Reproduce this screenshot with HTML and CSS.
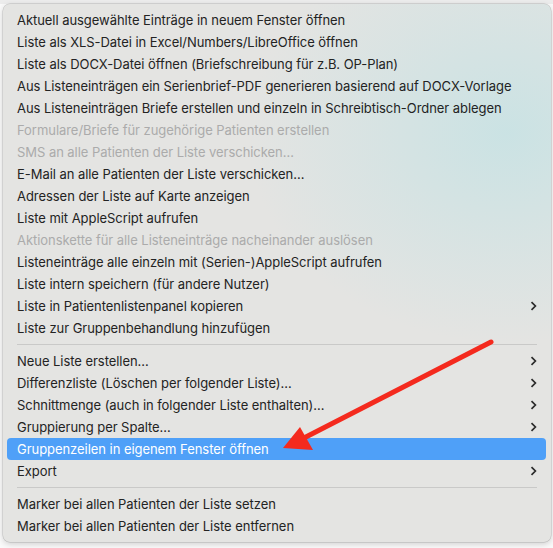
FILE: index.html
```html
<!DOCTYPE html>
<html lang="de">

<head>
  <meta charset="UTF-8" />
  <title>Listen-Kontextmenü</title>
  <link rel="stylesheet" href="styles.css">
</head>

<body>
  <div class="backdrop">
    <div class="menu">
      <div class="item">Aktuell ausgewählte Einträge in neuem Fenster öffnen</div>
      <div class="item">Liste als XLS-Datei in Excel/Numbers/LibreOffice öffnen</div>
      <div class="item">Liste als DOCX-Datei öffnen (Briefschreibung für z.B. OP-Plan)</div>
      <div class="item">Aus Listeneinträgen ein Serienbrief-PDF generieren basierend auf DOCX-Vorlage</div>
      <div class="item">Aus Listeneinträgen Briefe erstellen und einzeln in Schreibtisch-Ordner ablegen</div>
      <div class="item disabled">Formulare/Briefe für zugehörige Patienten erstellen</div>
      <div class="item disabled">SMS an alle Patienten der Liste verschicken…</div>
      <div class="item">E-Mail an alle Patienten der Liste verschicken…</div>
      <div class="item">Adressen der Liste auf Karte anzeigen</div>
      <div class="item">Liste mit AppleScript aufrufen</div>
      <div class="item disabled">Aktionskette für alle Listeneinträge nacheinander auslösen</div>
      <div class="item">Listeneinträge alle einzeln mit (Serien-)AppleScript aufrufen</div>
      <div class="item">Liste intern speichern (für andere Nutzer)</div>
      <div class="item">Liste in Patientenlistenpanel kopieren
        <svg class="chevron" viewBox="0 0 7 10"><path d="M1.5 1.2 L5.4 5 L1.5 8.8" /></svg>
      </div>
      <div class="item">Liste zur Gruppenbehandlung hinzufügen</div>
      <div class="separator"></div>
      <div class="item">Neue Liste erstellen…
        <svg class="chevron" viewBox="0 0 7 10"><path d="M1.5 1.2 L5.4 5 L1.5 8.8" /></svg>
      </div>
      <div class="item">Differenzliste (Löschen per folgender Liste)…
        <svg class="chevron" viewBox="0 0 7 10"><path d="M1.5 1.2 L5.4 5 L1.5 8.8" /></svg>
      </div>
      <div class="item">Schnittmenge (auch in folgender Liste enthalten)…
        <svg class="chevron" viewBox="0 0 7 10"><path d="M1.5 1.2 L5.4 5 L1.5 8.8" /></svg>
      </div>
      <div class="item">Gruppierung per Spalte…
        <svg class="chevron" viewBox="0 0 7 10"><path d="M1.5 1.2 L5.4 5 L1.5 8.8" /></svg>
      </div>
      <div class="item selected">Gruppenzeilen in eigenem Fenster öffnen</div>
      <div class="item">Export
        <svg class="chevron" viewBox="0 0 7 10"><path d="M1.5 1.2 L5.4 5 L1.5 8.8" /></svg>
      </div>
      <div class="separator"></div>
      <div class="item">Marker bei allen Patienten der Liste setzen</div>
      <div class="item">Marker bei allen Patienten der Liste entfernen</div>
    </div>

    <!-- annotation arrow drawn over the menu -->
    <svg class="arrow" viewBox="0 0 553 548">
      <line x1="491" y1="342" x2="300" y2="440" />
      <polygon points="283,448 300,427 313,450" />
    </svg>
  </div>
</body>

</html>
```

FILE: styles.css
```css
/* General */
body {
  margin: 0;
  background: #f3f3f3;
  font-family: 'Inter', 'Liberation Sans', sans-serif;
}

.backdrop {
  position: relative;
  width: 553px;
  height: 548px;
  overflow: hidden;
  background: linear-gradient(#ececec 0 4px, #fafafa 4px);
}

/* Context Menu */
.menu {
  margin: 4px 0 0 3px;
  width: 548px;
  height: 538px;
  box-sizing: border-box;
  padding: 5px 0;
  border-radius: 7px;
  background:
    radial-gradient(ellipse 260px 210px at 92% 24%, rgba(196, 226, 228, 0.8), rgba(210, 228, 228, 0) 100%),
    #e4e4e2;
  box-shadow: 0 0 0 0.5px rgba(0, 0, 0, 0.18), 0 2px 6px rgba(0, 0, 0, 0.18);
}

.item {
  height: 22px;
  margin: 0 5px 0 4px;
  padding: 0 9px 0 10px;
  display: flex;
  align-items: center;
  justify-content: space-between;
  font-size: 13px;
  letter-spacing: -0.05px;
  color: #232323;
  border-radius: 4px;
  white-space: nowrap;
}

.item.disabled {
  color: #ababab;
}

.item.selected {
  background: #4fa0f8;
  color: white;
}

.chevron {
  width: 7px;
  height: 10px;
  fill: none;
  stroke: #2b2b2b;
  stroke-width: 1.7;
}

.separator {
  height: 1px;
  margin: 5px 14px 5px 14px;
  background: #c9c9c8;
}

/* Red annotation arrow */
.arrow {
  position: absolute;
  top: 0;
  left: 0;
  width: 553px;
  height: 548px;
}

.arrow line {
  stroke: #f42a1e;
  stroke-width: 5;
  stroke-linecap: round;
}

.arrow polygon {
  fill: #f42a1e;
}
```
